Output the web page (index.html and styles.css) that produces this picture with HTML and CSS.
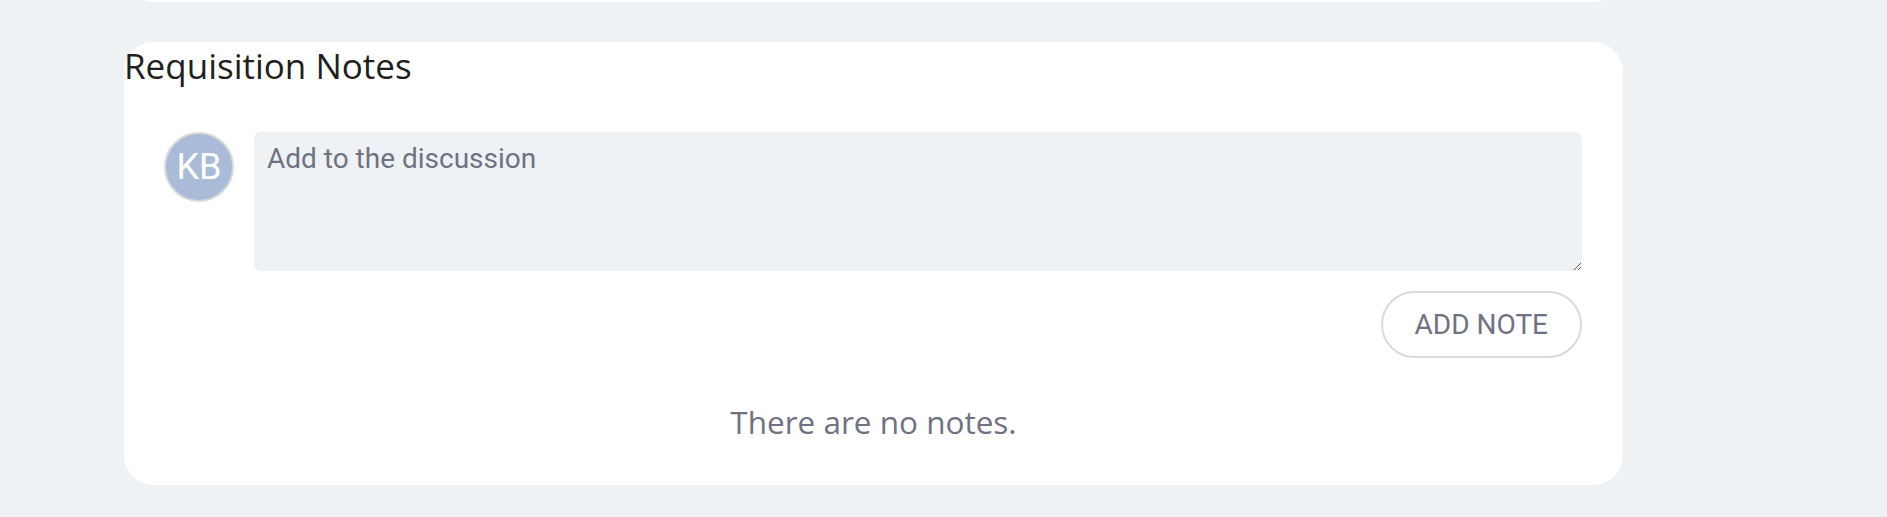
FILE: index.html
```html
<!DOCTYPE html>
<html lang="en">
<head>
<meta charset="utf-8">
<title>Requisition Notes</title>
<link rel="stylesheet" href="styles.css">
</head>
<body>
<div class="page">
  <div class="prev-card"></div>
  <section class="card">
    <h2 class="card-title">Requisition Notes</h2>
    <div class="compose">
      <div class="avatar">KB</div>
      <div class="compose-field">
        <textarea class="note-input" placeholder="Add to the discussion"></textarea>
        <button class="add-btn" type="button">ADD NOTE</button>
      </div>
    </div>
    <p class="empty">There are no notes.</p>
  </section>
</div>
</body>
</html>
```

FILE: styles.css
```css
html, body {
  margin: 0;
  padding: 0;
  background: #eff2f5;
}

.page {
  padding-left: 124px;
  width: 1499px;
}

.prev-card {
  height: 60px;
  margin-top: -58px;
  background: #ffffff;
  border-radius: 30px;
}

.card {
  margin-top: 40px;
  background: #ffffff;
  border-radius: 30px;
}

.card-title {
  margin: 0;
  font-family: "Open Sans", "Noto Sans", sans-serif;
  font-weight: 400;
  font-size: 35px;
  line-height: normal;
  color: #1f1f1f;
}

.compose {
  display: flex;
  gap: 20px;
  padding: 43px 41px 0 40px;
}

.avatar {
  flex: none;
  width: 70px;
  height: 70px;
  box-sizing: border-box;
  border: 2px solid #d9d9d9;
  border-radius: 50%;
  background: #a9bbd7;
  color: #ffffff;
  font-family: Roboto, "Liberation Sans", sans-serif;
  font-size: 36px;
  display: flex;
  align-items: center;
  justify-content: center;
}

.compose-field {
  flex: 1;
  display: flex;
  flex-direction: column;
  align-items: flex-end;
}

.note-input {
  display: block;
  width: 100%;
  height: 139px;
  box-sizing: border-box;
  margin: 0;
  padding: 10px 13px;
  border: none;
  border-radius: 7px;
  background: #eff2f5;
  font-family: Roboto, "Liberation Sans", sans-serif;
  font-size: 28px;
  line-height: normal;
  color: #333;
  outline: none;
}

.note-input::placeholder {
  color: #6e7282;
  opacity: 1;
}

.add-btn {
  margin-top: 20px;
  height: 67px;
  box-sizing: border-box;
  padding: 0 32px;
  border: 2px solid #dadada;
  border-radius: 34px;
  background: #ffffff;
  font-family: Roboto, "Liberation Sans", sans-serif;
  font-size: 28px;
  color: #6e7282;
  cursor: pointer;
}

.empty {
  margin: 0;
  padding: 42px 0 42px;
  text-align: center;
  font-family: "Open Sans", "Noto Sans", sans-serif;
  font-size: 31.5px;
  line-height: normal;
  color: #6e7282;
}
```
